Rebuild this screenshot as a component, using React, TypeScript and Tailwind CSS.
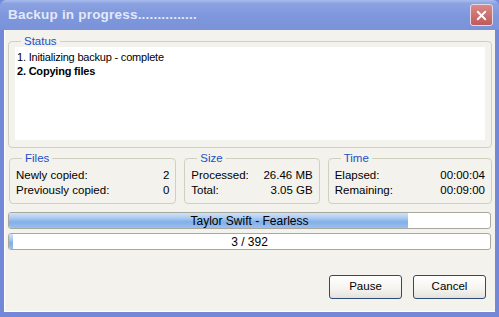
import { X } from 'lucide-react'

const font = "font-['Liberation_Sans','DejaVu_Sans',sans-serif]"

function GroupBox({ title, rows, className }: { title: string; rows: [string, string][]; className: string }) {
  return (
    <fieldset className={`rounded-[4px] border border-[#d0d0bf] px-[6px] pb-[6px] ${className}`}>
      <legend className="ml-[6px] px-[3px] text-[11.5px] leading-[12px] text-[#1f4fc6]">{title}</legend>
      <div className="flex flex-col gap-[2px] pt-[5px]">
        {rows.map(([label, value]) => (
          <div key={label} className="flex justify-between text-[11.5px] leading-[13px] text-black">
            <span>{label}</span>
            <span>{value}</span>
          </div>
        ))}
      </div>
    </fieldset>
  )
}

function ProgressBar({ pct, label }: { pct: number; label: string }) {
  return (
    <div className="relative h-[17px] overflow-hidden rounded-[3px] border border-[#a8a8a0] bg-white">
      <div
        className="h-full bg-[linear-gradient(to_bottom,#d2e2f6_0%,#b0cdf1_30%,#82afe8_60%,#9cc0ee_100%)]"
        style={{ width: `${pct}%` }}
      />
      <div className="absolute inset-0 flex items-center justify-center text-[12px] text-black">{label}</div>
    </div>
  )
}

function XpButton({ children }: { children: string }) {
  return (
    <button className="h-[24px] w-[73px] rounded-[3px] border border-[#2c4a78] bg-[linear-gradient(to_bottom,#ffffff,#f4f3ee_60%,#e4e2da)] text-[11.5px] text-black">
      {children}
    </button>
  )
}

export default function App() {
  return (
    <div className={`flex h-[317px] w-[499px] flex-col bg-[#7388d6] ${font}`}>
      {/* title bar */}
      <div className="flex h-[30px] items-center justify-between rounded-t-[6px] bg-[linear-gradient(to_bottom,#a9bcee_0%,#8ba2e2_12%,#7f97dc_50%,#7a92d8_100%)] pl-[8px] pr-[6px]">
        <span className="text-[13.5px] font-bold tracking-[0.2px] text-[#e3e9f8]">Backup in progress...............</span>
        <div className="flex h-[22px] w-[23px] items-center justify-center rounded-[3px] border border-[#e8d8e0] bg-[linear-gradient(to_bottom,#d88a8a,#c05a5a)]">
          <X className="h-[15px] w-[15px] text-white" strokeWidth={3} />
        </div>
      </div>

      {/* body */}
      <div className="mx-[4px] mb-[6px] flex flex-1 flex-col border-l border-white bg-[#f3f2ec] px-[3px] pb-[12px] shadow-[0_1px_0_#ffffff]">
        <fieldset className="mt-[5px] rounded-[4px] border border-[#d0d0bf] px-[6px] pb-[7px]">
          <legend className="ml-[6px] px-[3px] text-[11.5px] leading-[12px] text-[#1f4fc6]">Status</legend>
          <div className="h-[93px] bg-white px-[2px] pt-[3px] text-[11px] leading-[14px] tracking-[-0.2px] text-black">
            <div>1. Initializing backup - complete</div>
            <div className="font-bold">2. Copying files</div>
          </div>
        </fieldset>

        <div className="mt-[4px] flex gap-[8px] pl-[1px]">
          <GroupBox
            className="w-[168px]"
            title="Files"
            rows={[
              ['Newly copied:', '2'],
              ['Previously copied:', '0'],
            ]}
          />
          <GroupBox
            className="w-[136px]"
            title="Size"
            rows={[
              ['Processed:', '26.46 MB'],
              ['Total:', '3.05 GB'],
            ]}
          />
          <GroupBox
            className="w-[165px]"
            title="Time"
            rows={[
              ['Elapsed:', '00:00:04'],
              ['Remaining:', '00:09:00'],
            ]}
          />
        </div>

        <div className="mt-[8px] flex flex-col gap-[4px] pr-[1px]">
          <ProgressBar pct={83} label="Taylor Swift - Fearless" />
          <ProgressBar pct={0.8} label="3 / 392" />
        </div>

        <div className="mt-auto flex justify-end gap-[11px] pr-[6px]">
          <XpButton>Pause</XpButton>
          <XpButton>Cancel</XpButton>
        </div>
      </div>
    </div>
  )
}
